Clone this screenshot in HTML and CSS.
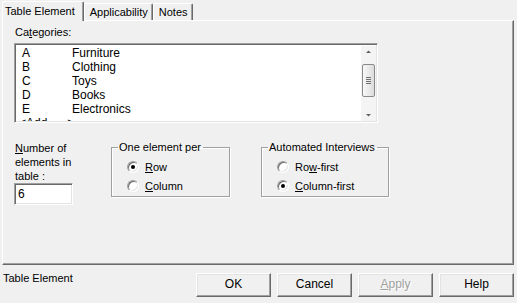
FILE: index.html
```html
<!DOCTYPE html>
<html>
<head>
<meta charset="utf-8">
<link rel="stylesheet" href="styles.css">
</head>
<body>
<div class="dialog">
  <div class="tabs">
    <div class="tab active">Table Element</div>
    <div class="tab">Applicability</div>
    <div class="tab">Notes</div>
  </div>
  <div class="panel">
    <div class="cat-label">Ca<u>t</u>egories:</div>
    <div class="listbox">
      <div class="list-items">
        <div class="row"><span class="code">A</span><span>Furniture</span></div>
        <div class="row"><span class="code">B</span><span>Clothing</span></div>
        <div class="row"><span class="code">C</span><span>Toys</span></div>
        <div class="row"><span class="code">D</span><span>Books</span></div>
        <div class="row"><span class="code">E</span><span>Electronics</span></div>
        <div class="row add">&lt;Add&nbsp;&nbsp;&nbsp;&nbsp;&nbsp;&nbsp;&gt;</div>
      </div>
      <div class="scrollbar">
        <svg class="arrow" width="15" height="10" viewBox="0 0 15 10"><path d="M5 6h5L7.5 3.5z" fill="#606060"/></svg>
        <div class="track">
          <div class="thumb">
            <svg width="13" height="33" viewBox="0 0 13 33"><path d="M4 13.5h5M4 15.5h5M4 17.5h5M4 19.5h5" stroke="#707070" stroke-width="1"/></svg>
          </div>
        </div>
        <svg class="arrow" width="15" height="10" viewBox="0 0 15 10"><path d="M5 4h5L7.5 6.5z" fill="#606060"/></svg>
      </div>
    </div>
    <div class="bottom">
      <div class="count">
        <div class="count-label"><u>N</u>umber of<br>elements in<br>table :</div>
        <div class="input">6</div>
      </div>
      <fieldset class="group g1">
        <legend>One element per</legend>
        <div class="radio"><span class="dot on"></span><span><u>R</u>ow</span></div>
        <div class="radio"><span class="dot"></span><span><u>C</u>olumn</span></div>
      </fieldset>
      <fieldset class="group g2">
        <legend>Automated Interviews</legend>
        <div class="radio"><span class="dot"></span><span>Ro<u>w</u>-first</span></div>
        <div class="radio"><span class="dot on"></span><span><u>C</u>olumn-first</span></div>
      </fieldset>
    </div>
  </div>
  <div class="footer">
    <div class="status">Table Element</div>
    <div class="buttons">
      <div class="btn">OK</div>
      <div class="btn">Cancel</div>
      <div class="btn disabled"><u>A</u>pply</div>
      <div class="btn">Help</div>
    </div>
  </div>
</div>
</body>
</html>
```

FILE: styles.css
```css
html, body {
  margin: 0;
  padding: 0;
}
body {
  width: 517px;
  height: 303px;
  background: #f0f0f0;
  font-family: "Liberation Sans", Arial, sans-serif;
  font-size: 11px;
  color: #000;
  overflow: hidden;
}
.dialog {
  padding: 1px 3px 0 2px;
}
.tabs {
  display: flex;
  align-items: flex-end;
  height: 19px;
  position: relative;
  z-index: 2;
}
.tab {
  height: 17px;
  line-height: 16px;
  padding: 0 4px 0 5px;
  box-sizing: border-box;
  border-top: 1px solid #fff;
  border-left: 1px solid #fff;
  border-right: 1px solid #696969;
  box-shadow: inset -1px 0 0 #a0a0a0;
  border-radius: 2px 2px 0 0;
}
.tab.active {
  height: 20px;
  margin-bottom: -1px;
  padding: 1px 8px 0 2px;
  line-height: 16px;
  background: #f0f0f0;
}
.panel {
  height: 245px;
  box-sizing: border-box;
  border-top: 1px solid #fff;
  border-left: 1px solid #fff;
  border-right: 1px solid #696969;
  border-bottom: 1px solid #696969;
  box-shadow: inset -1px -1px 0 #a0a0a0;
  padding: 5px 0 0 11px;
}
.cat-label {
  height: 13px;
  line-height: 13px;
  margin-left: 1px;
}
.listbox {
  margin-top: 4px;
  width: 364px;
  height: 80px;
  box-sizing: border-box;
  border-top: 1px solid #a0a0a0;
  border-left: 1px solid #a0a0a0;
  border-right: 1px solid #fff;
  border-bottom: 1px solid #fff;
  box-shadow: inset 1px 1px 0 #696969, inset -1px -1px 0 #e3e3e3;
  background: #fff;
  display: flex;
  overflow: hidden;
  padding: 2px 1px 1px 2px;
}
.list-items {
  flex: 1;
  overflow: hidden;
  font-size: 12px;
  padding-left: 5px;
}
.row {
  display: flex;
  height: 14px;
  line-height: 14px;
}
.code {
  width: 50px;
}
.add {
  margin-left: -3px;
}
.scrollbar {
  width: 15px;
  display: flex;
  flex-direction: column;
  background: #f4f4f4;
}
.arrow {
  display: block;
  height: 12px;
  flex: none;
}
.track {
  flex: 1;
  padding-top: 6px;
}
.thumb {
  width: 13px;
  height: 33px;
  margin-left: 1px;
  box-sizing: border-box;
  border: 1px solid #8a8a8a;
  border-radius: 2px;
  background: linear-gradient(to right, #f8f8f8, #dcdcdc);
  position: relative;
}
.thumb svg {
  position: absolute;
  left: -1px;
  top: -1px;
}
.bottom {
  display: flex;
  margin-top: 18px;
}
.count {
  width: 96px;
  margin-left: 1px;
}
.count-label {
  line-height: 14px;
  height: 42px;
}
.input {
  width: 59px;
  height: 22px;
  box-sizing: border-box;
  border-top: 1px solid #a0a0a0;
  border-left: 1px solid #a0a0a0;
  border-right: 1px solid #fff;
  border-bottom: 1px solid #fff;
  box-shadow: inset 1px 1px 0 #696969, inset -1px -1px 0 #e3e3e3;
  background: #fff;
  padding: 3px 0 0 3px;
  font-size: 12px;
  margin-left: -1px;
}
.group {
  margin: 0;
  padding: 4px 0 0 15px;
  height: 56px;
  box-sizing: border-box;
  border: 1px solid #a0a0a0;
  box-shadow: 1px 1px 0 #fff, inset 1px 1px 0 #fff;
  border-radius: 0;
  min-width: 0;
}
.group legend {
  padding: 0 2px 0 1px;
  margin-left: -9px;
  line-height: 12px;
}
.g1 {
  width: 119px;
}
.g2 {
  width: 128px;
  margin-left: 31px;
}
.radio {
  display: flex;
  align-items: center;
  height: 19px;
}
.dot {
  width: 12px;
  height: 12px;
  box-sizing: border-box;
  border-radius: 50%;
  background: #fff;
  border: 1px solid;
  border-color: #a0a0a0 #fff #fff #a0a0a0;
  box-shadow: inset 1px 1px 0 #696969, inset -1px -1px 0 #e3e3e3;
  margin-right: 6px;
  position: relative;
}
.dot.on::after {
  content: "";
  position: absolute;
  width: 4px;
  height: 4px;
  background: #000;
  border-radius: 50%;
  left: 3px;
  top: 3px;
}
.footer {
  display: flex;
  justify-content: space-between;
  align-items: flex-start;
  margin-top: 6px;
}
.status {
  margin-left: 1px;
  line-height: 14px;
}
.buttons {
  display: flex;
  gap: 6px;
  margin-top: 2px;
}
.btn {
  width: 75px;
  height: 24px;
  box-sizing: border-box;
  border-top: 1px solid #fff;
  border-left: 1px solid #fff;
  border-right: 1px solid #696969;
  border-bottom: 1px solid #696969;
  box-shadow: inset -1px -1px 0 #a0a0a0, inset 1px 1px 0 #e3e3e3;
  text-align: center;
  line-height: 21px;
  font-size: 12px;
}
.btn.disabled {
  color: #a0a0a0;
  text-shadow: 1px 1px 0 #fff;
}
```
